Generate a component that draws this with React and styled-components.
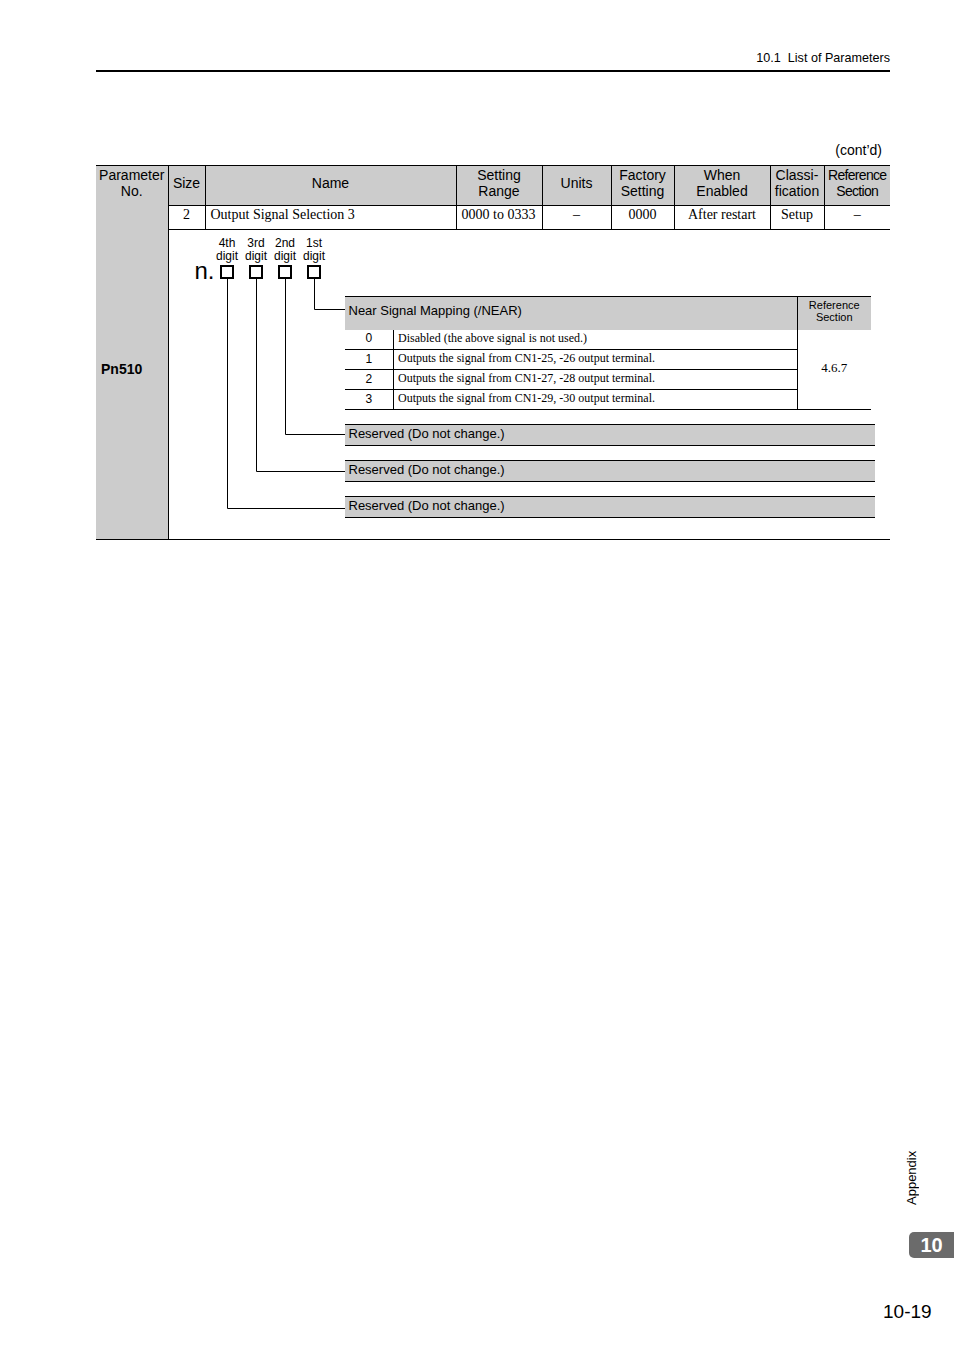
import styled, { createGlobalStyle } from "styled-components";

const GlobalStyle = createGlobalStyle`
  html, body {
    margin: 0;
    padding: 0;
    background: #fff;
  }
  body {
    font-family: "Liberation Sans", Arial, sans-serif;
    color: #000;
  }
  * {
    box-sizing: border-box;
  }
`;

const GRAY = "#cccccc";

const Page = styled.div`
  width: 954px;
  min-height: 1350px;
  padding: 0 64px 26px 96px;
  display: flex;
  flex-direction: column;
`;

const RunningHead = styled.div`
  padding-top: 50px;
  padding-bottom: 4px;
  border-bottom: 2px solid #000;
  text-align: right;
  font-size: 12.6px;
  line-height: 16px;
  white-space: pre;
`;

const ContNote = styled.div`
  margin-top: 70px;
  margin-bottom: 7px;
  padding-right: 8px;
  text-align: right;
  font-size: 14px;
  line-height: 16px;
`;

const Table = styled.table`
  width: 794px;
  border-collapse: collapse;
  table-layout: fixed;
  border-top: 1px solid #000;
  border-bottom: 1px solid #000;
`;

const Th = styled.th`
  background: ${GRAY};
  font-weight: normal;
  font-size: 14px;
  line-height: 16px;
  letter-spacing: ${(p) => (p.$narrow ? "-0.7px" : "0")};
  height: 40px;
  padding: 0 0 6px;
  text-align: center;
  vertical-align: middle;
  border-left: ${(p) => (p.$first ? "none" : "1px solid #000")};
  border-bottom: ${(p) => (p.$first ? "none" : "1px solid #000")};
`;

const ParamCell = styled.td`
  background: ${GRAY};
  font-weight: bold;
  font-size: 14px;
  padding: 0 0 6px 5px;
  vertical-align: middle;
  border-right: 1px solid #000;
`;

const Td = styled.td`
  font-family: "Liberation Serif", "Times New Roman", serif;
  font-size: 14px;
  line-height: 16px;
  height: 24px;
  padding: 0 ${(p) => (p.$left ? "5px" : "0")} 5px;
  text-align: ${(p) => (p.$left ? "left" : "center")};
  vertical-align: middle;
  border-left: 1px solid #000;
  border-bottom: 1px solid #000;
  white-space: nowrap;
`;

const DiagramCell = styled.td`
  height: 310px;
  padding: 0;
  vertical-align: top;
`;

const Diagram = styled.div`
  position: relative;
  height: 309px;
  padding-top: 7px;
`;

const DigitGrid = styled.div`
  display: grid;
  grid-template-columns: 44px repeat(4, 29px);
  align-items: end;
`;

const DigitLabel = styled.div`
  font-size: 12px;
  line-height: 13px;
  text-align: center;
`;

const Prefix = styled.div`
  font-size: 24px;
  line-height: 16px;
  text-align: right;
  margin-right: -2px;
`;

const BoxCell = styled.div`
  display: flex;
  justify-content: center;
`;

const DigitBox = styled.div`
  width: 14px;
  height: 14px;
  border: 2px solid #000;
  margin-left: -1px;
`;

const Connectors = styled.svg`
  position: absolute;
  top: 0;
  left: 0;
  pointer-events: none;
`;

const Branches = styled.div`
  margin-left: 176px;
  margin-top: 17px;
  display: flex;
  flex-direction: column;
  gap: 14px;
`;

const SubTable = styled.table`
  width: 526px;
  border-collapse: collapse;
  table-layout: fixed;
  border-top: 1px solid #000;
  border-bottom: 1px solid #000;
`;

const SubHead = styled.th`
  background: ${GRAY};
  font-weight: normal;
  height: 33px;
  padding: 0 ${(p) => (p.$ref ? "0" : "4px")} 4px;
  text-align: ${(p) => (p.$ref ? "center" : "left")};
  font-size: ${(p) => (p.$ref ? "11px" : "13px")};
  line-height: ${(p) => (p.$ref ? "12px" : "16px")};
  border-left: ${(p) => (p.$ref ? "1px solid #000" : "none")};
`;

const NumCell = styled.td`
  height: 20px;
  padding: 0 0 2px;
  text-align: center;
  font-size: 12px;
  border-bottom: ${(p) => (p.$last ? "none" : "1px solid #000")};
  border-right: 1px solid #000;
`;

const DescCell = styled.td`
  height: 20px;
  padding: 0 4px 2px;
  font-family: "Liberation Serif", "Times New Roman", serif;
  font-size: 12px;
  border-bottom: ${(p) => (p.$last ? "none" : "1px solid #000")};
  white-space: nowrap;
`;

const RefCell = styled.td`
  padding: 0 0 2px;
  text-align: center;
  font-family: "Liberation Serif", "Times New Roman", serif;
  font-size: 13px;
  border-left: 1px solid #000;
`;

const ReservedBar = styled.div`
  width: 530px;
  height: 22px;
  background: ${GRAY};
  border-top: 1px solid #000;
  border-bottom: 1px solid #000;
  padding-left: 4px;
  font-size: 13px;
  line-height: 18px;
`;

const Side = styled.aside`
  margin-top: auto;
  margin-right: -64px;
  align-self: flex-end;
  width: 74px;
  display: flex;
  flex-direction: column;
`;

const SideLabel = styled.div`
  writing-mode: vertical-rl;
  transform: rotate(180deg);
  font-size: 13px;
  line-height: 15px;
  margin-left: 24px;
  height: 62px;
  text-align: left;
`;

const ChapterTab = styled.div`
  margin-top: 27px;
  margin-left: 29px;
  height: 26px;
  background: #6b6b6b;
  border-radius: 5px 0 0 5px;
  color: #fff;
  font-weight: bold;
  font-size: 20px;
  line-height: 26px;
  text-align: center;
`;

const PageNo = styled.div`
  margin-top: 42px;
  margin-left: 3px;
  font-size: 19px;
  line-height: 24px;
`;

const headers = [
  { label: ["Parameter", "No."], first: true },
  { label: ["Size"] },
  { label: ["Name"] },
  { label: ["Setting", "Range"] },
  { label: ["Units"] },
  { label: ["Factory", "Setting"] },
  { label: ["When", "Enabled"] },
  { label: ["Classi-", "fication"] },
  { label: ["Reference", "Section"], narrow: true },
];

const widths = [72, 37, 251, 86, 69, 63, 96, 54, 66];

const options = [
  ["0", "Disabled (the above signal is not used.)"],
  ["1", "Outputs the signal from CN1-25, -26 output terminal."],
  ["2", "Outputs the signal from CN1-27, -28 output terminal."],
  ["3", "Outputs the signal from CN1-29, -30 output terminal."],
];

// x of each digit box centre, y where its branch meets the table
const branches = [
  [145.5, 79.5],
  [116.5, 204.5],
  [87.5, 241.5],
  [58.5, 278.5],
];

function DigitDiagram() {
  return (
    <Diagram>
      <DigitGrid>
        <span />
        {["4th", "3rd", "2nd", "1st"].map((d) => (
          <DigitLabel key={d}>
            {d}
            <br />
            digit
          </DigitLabel>
        ))}
        <Prefix>n.</Prefix>
        {[0, 1, 2, 3].map((i) => (
          <BoxCell key={i}>
            <DigitBox />
          </BoxCell>
        ))}
      </DigitGrid>

      <Connectors width="200" height="300">
        {branches.map(([x, y]) => (
          <polyline
            key={x}
            points={`${x},49 ${x},${y} 176,${y}`}
            fill="none"
            stroke="#000"
            strokeWidth="1"
          />
        ))}
      </Connectors>

      <Branches>
        <SubTable>
          <colgroup>
            <col style={{ width: 49 }} />
            <col style={{ width: 404 }} />
            <col style={{ width: 73 }} />
          </colgroup>
          <thead>
            <tr>
              <SubHead colSpan={2}>Near Signal Mapping (/NEAR)</SubHead>
              <SubHead $ref>
                Reference
                <br />
                Section
              </SubHead>
            </tr>
          </thead>
          <tbody>
            {options.map(([n, text], i) => (
              <tr key={n}>
                <NumCell $last={i === options.length - 1}>{n}</NumCell>
                <DescCell $last={i === options.length - 1}>{text}</DescCell>
                {i === 0 && <RefCell rowSpan={4}>4.6.7</RefCell>}
              </tr>
            ))}
          </tbody>
        </SubTable>
        <ReservedBar>Reserved (Do not change.)</ReservedBar>
        <ReservedBar>Reserved (Do not change.)</ReservedBar>
        <ReservedBar>Reserved (Do not change.)</ReservedBar>
      </Branches>
    </Diagram>
  );
}

export default function App() {
  return (
    <>
      <GlobalStyle />
      <Page>
        <RunningHead>10.1  List of Parameters</RunningHead>
        <ContNote>(cont’d)</ContNote>
        <Table>
          <colgroup>
            {widths.map((w, i) => (
              <col key={i} style={{ width: w }} />
            ))}
          </colgroup>
          <thead>
            <tr>
              {headers.map((h) => (
                <Th key={h.label[0]} $first={h.first} $narrow={h.narrow}>
                  {h.label[0]}
                  {h.label[1] && (
                    <>
                      <br />
                      {h.label[1]}
                    </>
                  )}
                </Th>
              ))}
            </tr>
          </thead>
          <tbody>
            <tr>
              <ParamCell rowSpan={2}>Pn510</ParamCell>
              <Td>2</Td>
              <Td $left>Output Signal Selection 3</Td>
              <Td $left>0000 to 0333</Td>
              <Td>–</Td>
              <Td>0000</Td>
              <Td>After restart</Td>
              <Td>Setup</Td>
              <Td>–</Td>
            </tr>
            <tr>
              <DiagramCell colSpan={8}>
                <DigitDiagram />
              </DiagramCell>
            </tr>
          </tbody>
        </Table>
        <Side>
          <SideLabel>Appendix</SideLabel>
          <ChapterTab>10</ChapterTab>
          <PageNo>10-19</PageNo>
        </Side>
      </Page>
    </>
  );
}
